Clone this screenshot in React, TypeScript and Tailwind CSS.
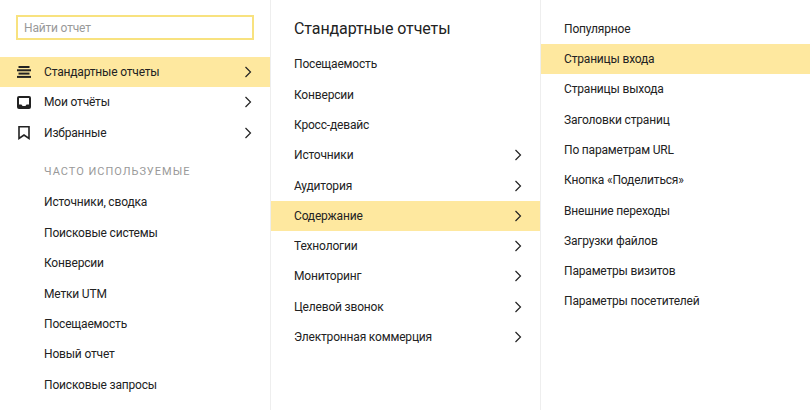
import React from 'react';

const Chevron = () => (
  <svg viewBox="0 0 10 14" className="w-[10px] h-[14px] fill-none stroke-[#222] shrink-0" strokeWidth="1.2">
    <path d="M2.5 2l5 5-5 5" />
  </svg>
);

const StackIcon = () => (
  <svg viewBox="0 0 14 12" className="w-[14px] h-3 fill-[#222]">
    <rect x="1.5" y="0" width="11" height="2" />
    <rect x="0" y="3.3" width="14" height="2" />
    <rect x="1.5" y="6.6" width="11" height="2" />
    <rect x="0" y="9.9" width="14" height="2" />
  </svg>
);

const InboxIcon = () => (
  <svg viewBox="0 0 14 13" className="w-[14px] h-[13px]">
    <path d="M2 0h10a2 2 0 0 1 2 2v9a2 2 0 0 1-2 2H2a2 2 0 0 1-2-2V2a2 2 0 0 1 2-2z" fill="#222" />
    <path d="M2 2h10v6.5H9.6L8.4 10H5.6L4.4 8.5H2z" fill="#fff" />
  </svg>
);

const BookmarkIcon = () => (
  <svg viewBox="0 0 14 14" className="w-[14px] h-[14px] fill-none stroke-[#222]" strokeWidth="1.6">
    <path d="M2 .8h10v11.6L7 9l-5 3.4z" />
  </svg>
);

const Row = ({ label, active, arrow, icon }: { label: string; active?: boolean; arrow?: boolean; icon?: React.ReactNode }) => (
  <div className={`h-[30.3px] flex items-center pr-[17px] ${icon ? 'pl-[17px]' : 'pl-[23px]'} ${active ? 'bg-[#fee89f]' : ''}`}>
    {icon && <div className="w-[27px] flex items-center">{icon}</div>}
    <span className="flex-1 truncate">{label}</span>
    {arrow && <Chevron />}
  </div>
);

const middle = [
  { label: 'Посещаемость' },
  { label: 'Конверсии' },
  { label: 'Кросс-девайс' },
  { label: 'Источники', arrow: true },
  { label: 'Аудитория', arrow: true },
  { label: 'Содержание', arrow: true, active: true },
  { label: 'Технологии', arrow: true },
  { label: 'Мониторинг', arrow: true },
  { label: 'Целевой звонок', arrow: true },
  { label: 'Электронная коммерция', arrow: true },
];

const right = [
  'Популярное',
  'Страницы входа',
  'Страницы выхода',
  'Заголовки страниц',
  'По параметрам URL',
  'Кнопка «Поделиться»',
  'Внешние переходы',
  'Загрузки файлов',
  'Параметры визитов',
  'Параметры посетителей',
];

const frequent = ['Источники, сводка', 'Поисковые системы', 'Конверсии', 'Метки UTM', 'Посещаемость', 'Новый отчет', 'Поисковые запросы'];

export default function App() {
  return (
    <div className="w-[810px] h-[410px] overflow-hidden bg-white flex text-[12px] tracking-[-0.18px] text-[#222] font-['Roboto',sans-serif]">
      {/* левая колонка */}
      <div className="w-[271px] shrink-0 border-r border-[#eeeeee]">
        <div className="pt-[15px] pl-4 pr-4 pb-[17px]">
          <div className="h-[25px] border-2 border-[#f8e27f] flex items-center px-[6px] text-[#999999]">Найти отчет</div>
        </div>
        <Row label="Стандартные отчеты" active arrow icon={<StackIcon />} />
        <Row label="Мои отчёты" arrow icon={<InboxIcon />} />
        <Row label="Избранные" arrow icon={<BookmarkIcon />} />
        <div className="pl-11 pt-[16px] h-[39.4px] text-[11px] leading-[15px] tracking-[1px] text-[#999999]">ЧАСТО ИСПОЛЬЗУЕМЫЕ</div>
        {frequent.map((f) => (
          <div key={f} className="h-[30.4px] flex items-center pl-11">{f}</div>
        ))}
      </div>
      {/* средняя */}
      <div className="w-[270px] shrink-0 border-r border-[#eeeeee]">
        <div className="h-[49.2px] pt-[18px] pl-[23px] text-[16px] tracking-[-0.1px] leading-[21px]">Стандартные отчеты</div>
        {middle.map((m) => (
          <Row key={m.label} label={m.label} arrow={m.arrow} active={m.active} />
        ))}
      </div>
      {/* правая */}
      <div className="flex-1 pt-[13.6px]">
        {right.map((r, i) => (
          <Row key={r} label={r} active={i === 1} />
        ))}
      </div>
    </div>
  );
}
